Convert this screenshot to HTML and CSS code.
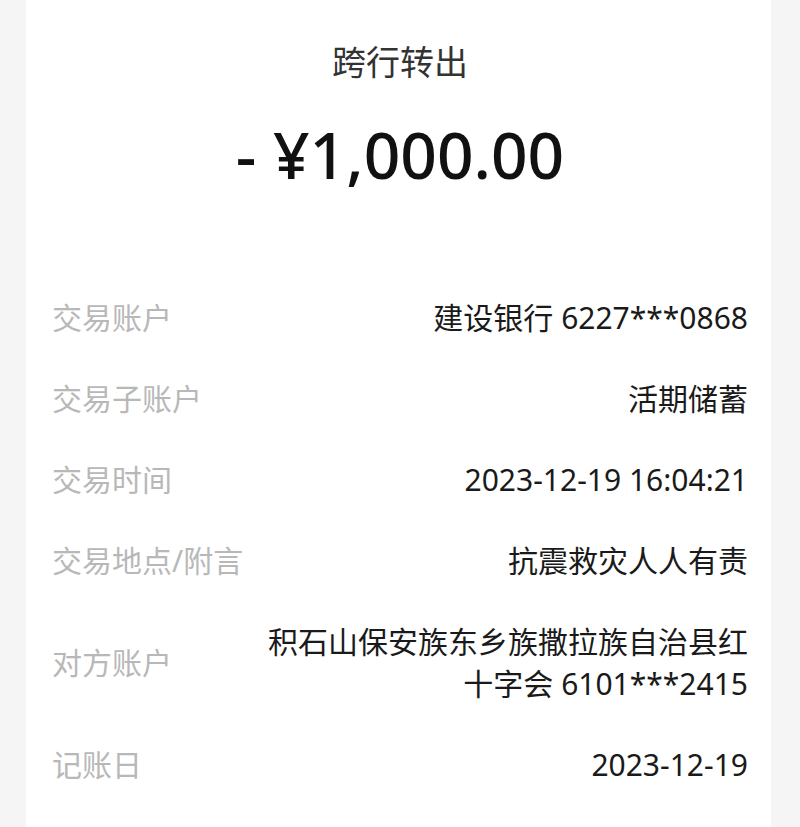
FILE: index.html
```html
<!DOCTYPE html>
<html lang="zh-CN">
<head>
    <meta charset="UTF-8">
    <meta name="viewport" content="width=device-width, initial-scale=1.0">
    <title>交易详情</title>
    <link rel="stylesheet" href="styles.css">
</head>
<body>
    <div class="detail-card">
        <div class="detail-header">
            <div class="trans-type">跨行转出</div>
            <div class="trans-amount">- ¥1,000.00</div>
        </div>
        <div class="detail-list">
            <div class="detail-row">
                <div class="detail-label">交易账户</div>
                <div class="detail-value">建设银行 6227***0868</div>
            </div>
            <div class="detail-row">
                <div class="detail-label">交易子账户</div>
                <div class="detail-value">活期储蓄</div>
            </div>
            <div class="detail-row">
                <div class="detail-label">交易时间</div>
                <div class="detail-value">2023-12-19 16:04:21</div>
            </div>
            <div class="detail-row">
                <div class="detail-label">交易地点/附言</div>
                <div class="detail-value">抗震救灾人人有责</div>
            </div>
            <div class="detail-row">
                <div class="detail-label">对方账户</div>
                <div class="detail-value">积石山保安族东乡族撒拉族自治县红<br>十字会 6101***2415</div>
            </div>
            <div class="detail-row">
                <div class="detail-label">记账日</div>
                <div class="detail-value">2023-12-19</div>
            </div>
        </div>
    </div>
</body>
</html>
```

FILE: styles.css
```css
body {
    margin: 0;
    background: #f5f5f5;
    font-family: "Noto Sans", "Noto Sans CJK SC", sans-serif;
    color: #1a1a1a;
}
.detail-card {
    margin-left: 26px;
    width: 745px;
    min-height: 827px;
    box-sizing: border-box;
    background: #fff;
    padding: 41px 23px 0 26px;
}
.detail-header {
    display: flex;
    flex-direction: column;
    align-items: center;
    gap: 32px;
    margin-bottom: 82px;
}
.trans-type {
    font-size: 34px;
    line-height: 42px;
    color: #333;
}
.trans-amount {
    font-size: 64px;
    line-height: 80px;
    font-weight: 500;
    color: #111;
}
.detail-row {
    display: flex;
    justify-content: space-between;
    align-items: center;
    padding: 19.5px 0;
}
.detail-label {
    font-size: 30px;
    line-height: 42px;
    color: #b8b8b8;
    white-space: nowrap;
}
.detail-value {
    font-size: 30px;
    line-height: 42px;
    text-align: right;
    color: #1a1a1a;
}
```
